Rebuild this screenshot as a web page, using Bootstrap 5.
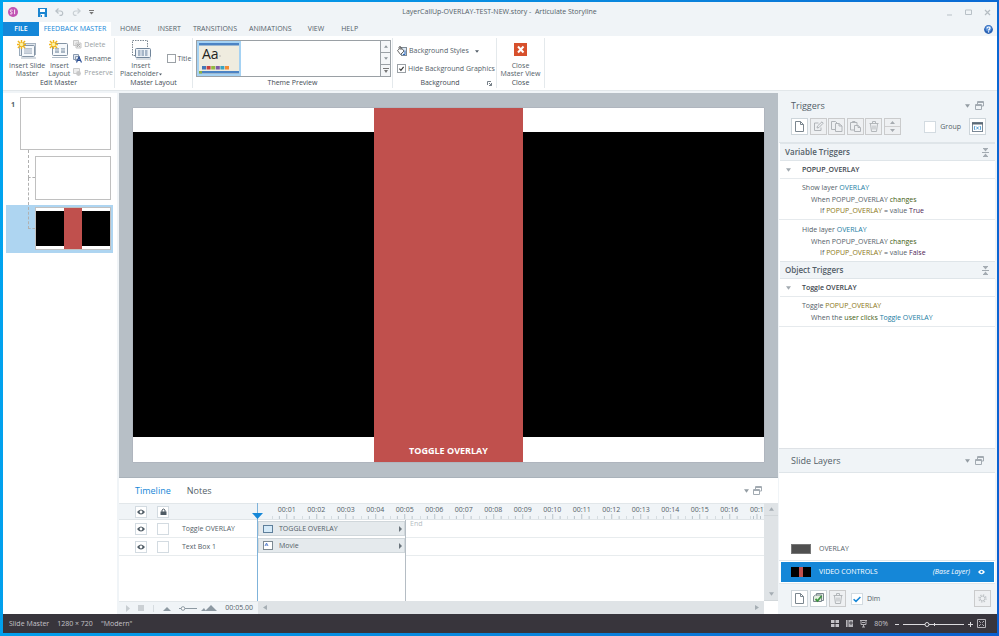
<!DOCTYPE html>
<html lang="en">
<head>
<meta charset="utf-8">
<meta name="viewport" content="width=device-width, initial-scale=1">
<title>LayerCallUp-OVERLAY-TEST-NEW.story - Articulate Storyline</title>
<link href="https://cdn.jsdelivr.net/npm/bootstrap@5.3.0/dist/css/bootstrap.min.css" rel="stylesheet">
<style>
:root{--ink:#535e68;--pale:#f0f4f7;--line:#dfe5e9;--blue:#1587d8}
body{font:7px/8px "Open Sans",sans-serif;color:var(--ink);background:linear-gradient(100deg,#00a5f0 0,#0a84dc 60%,#0a5fd0 100%);padding:2px 2px 3px 3px}
button{background:none;border:0;padding:0;color:inherit;font:inherit;line-height:8px}
input[type=checkbox]{appearance:none;margin:0;background:#fff;border:1px solid #d3dbe1;flex:none;width:12px;height:12px}
input[type=checkbox].tiny{width:9px;height:9px;border-color:#9ba1a6}
input.ticked:checked{background:#fff url("data:image/svg+xml,%3Csvg xmlns='http://www.w3.org/2000/svg' viewBox='0 0 10 10'%3E%3Cpath d='M2 5.2 4.2 7.6 8 2.6' fill='none' stroke='%23333' stroke-width='1.6'/%3E%3C/svg%3E") center/contain}
input.bluetick:checked{background:#fff url("data:image/svg+xml,%3Csvg xmlns='http://www.w3.org/2000/svg' viewBox='0 0 10 10'%3E%3Cpath d='M1.6 5.2 4 7.4 8.4 3' fill='none' stroke='%231587d8' stroke-width='1.5'/%3E%3C/svg%3E") center/contain}
svg{display:block;flex:none}
.shell{background:var(--pale)}
.titlebar{height:20px;padding:0 6px 0 5px}
.titletext{flex:1;text-align:center;white-space:pre}
.savebtn{margin-left:20px}
.side{width:150px}
.tabs{height:14px}
.tabs button{height:14px;padding:0 9px}
.tabs .filetab{width:36px;background:var(--blue);color:#fff;font-weight:600}
.tabs .current{width:72px;background:#fff;color:var(--blue);padding:0}
.ribbon{height:55px;background:#fff;border-bottom:1px solid #e2e7ea}
.rgroup{border-right:1px solid #e4e9ec;margin:2px 0;display:flex;flex-direction:column;flex:none}
.rgroup>div:first-child{height:41px;padding-top:2px}
.rlabel{text-align:center;color:#424b53}
.g-edit{width:112px}.g-layout{width:78px}.g-theme{width:200px}.g-bg{width:104px}.g-close{width:48px}
.inset{padding-left:6px;gap:3px}
.inset-s{padding-left:5px;gap:1px}
.big{display:flex;flex-direction:column;align-items:center;gap:2px;text-align:center;white-space:nowrap}
.big>svg{height:20px}
.stackbtns{display:flex;flex-direction:column;gap:5px}
.titlebox{margin-top:14px}
.gap-t{gap:2px}
.off{color:#9a9fa4}
.gallery{border:1px solid #9aa0a5;height:37px;margin:0 1px 0 3px}
.themecard{width:44px;background:#efecdf;border:2px solid #a5d2f3}
.spin{width:10px;border-left:1px solid #9aa0a5}
.spin button{flex:1;display:flex;align-items:center;justify-content:center;background:#f4f6f8;color:#8b9399}
.spin button+button{border-top:1px solid #9aa0a5}
.work{margin-top:2px;padding-right:2px}
.slides{width:114px;background:#fff;padding:4px 0 0 3px;margin-right:2px;flex:none}
.slideline{padding-right:6px}
.num{width:14px;padding:4px 0 0 5px;font-weight:700}
.thumb{border:1px solid #c0c0c0;background:#fff;flex:1}
.thumb.lg{height:53px}.thumb.md{height:44px;margin:6px 0 5px}
.branch{width:7px;margin-left:22px;display:flex;flex-direction:column}
.branch div{flex:1;border-left:1px dashed #b0b0b0}
.branch div:first-child{border-bottom:1px dashed #b0b0b0}
.branch div.nil{border-left:0}
.picked{background:#aed5f1;width:107px;padding:2px 2px 3px 0}
.minis{border:1px solid #c0c0c0;flex:1;height:43px}
.artwork{display:grid;grid-template-columns:241fr 148fr 241fr}
.strip{background:#000;border:solid #fff;border-width:24px 0 25px}
.minis .strip{border-width:3px 0}
.redcol{background:#c0504d;color:#fff;display:flex;align-items:end;justify-content:center}
.redcol button{font-size:9px;line-height:12px;font-weight:700;padding-bottom:5px}
.stage{background:#b7bfc6;padding:15px 14px;flex:1}
.stage .artwork{flex:1;box-shadow:0 0 1px #889}
.tl{background:#fff;height:137px;border-top:1px solid #a9b2ba}
.tlhead{height:25px;padding:0 16px}
.h9{font-size:9px;line-height:12px}
.h8{font-size:8px;line-height:10px}
.active-tab{color:var(--blue)}
.names{width:139px;border-right:1px solid #7fb3da;display:flex;flex-direction:column;flex:none}
.names .rowx{padding-left:16px;gap:10px}
.rowx{height:18px;display:flex;align-items:center;border-bottom:1px solid #e8ecee}
.rulerow{height:17px;background:var(--pale);border-top:1px solid #e2e7ea;border-bottom:1px solid #e0e5e8}
.names .rulerow{display:flex;align-items:center;padding-left:16px;gap:10px}
.cellbox{width:12px;height:12px;border:1px solid #d3dbe1;background:#fff;display:flex;align-items:center;justify-content:center}
.names .lbl{padding-left:3px}
.playhead{align-self:flex-end;margin:auto -6px 0 auto;position:relative}
.ruler{display:flex;overflow:hidden;padding-left:14px}
.sec{flex:1 0 0;text-align:center;min-width:0;display:flex;flex-direction:column;justify-content:end}
.sec.cut{flex:0 0 20px;overflow:hidden;text-align:left;padding-left:6px}
.sec svg{width:100%;height:5px}
.clips{width:148px;border-right:1px solid #b5bdc4;flex:none}
.clip{height:15px;background:#e5eaed;border:1px solid #d0d7db;display:flex;align-items:center;padding:0 2px 0 4px;margin-top:1px;margin-bottom:2px;gap:6px}
.endlbl{color:#b4bcc2}
.bar{height:13px}
.bar.ctl{width:139px;background:var(--pale);border-top:1px solid #e2e7ea;padding:0 5px 0 7px;flex:none}
.vrule{width:1px;height:7px;background:#d6dce0;margin:0 9px}
.bar.scroll{background:#dfe3e6;padding:0 5px}
.vs{width:14px;background:#dfe3e6;flex:none}
.vs div{height:13px;display:flex;align-items:center;justify-content:center;border:solid #d2d7da;border-width:0 0 1px}
.vs svg{color:#a5adb3}
.right{width:216px;background:#fff;margin-left:1px;flex:none}
.phead{background:var(--pale);border-bottom:1px solid var(--line);padding:0 9px 0 12px}
.trighead{padding-bottom:7px}
.ph1{height:25px}
.floaticon{margin:0 2px 0 5px}
.sect{background:var(--pale);border:solid var(--line);border-width:1px 0;font-weight:600;height:18px;padding:0 6px 0 5px;margin-left:1px}
.sub{height:18px;border-bottom:1px solid #e6eaed;font-weight:600;color:#3f484f;gap:11px;padding-left:6px;margin-left:1px}
.trig{padding:3px 0 3px 23px;border-bottom:1px solid #e6eaed;line-height:11px}
.trig+.trig{padding-top:4px}
.trig .l2{padding:1px 0 0 9px}.trig .l3{padding-left:18px}
.tool{width:17px;height:17px;background:#fff;border:1px solid #cdd5da;display:flex;align-items:center;justify-content:center;flex:none}
.tool.dis{background:#eef0f2;border-color:#cacbcc}
.tools{width:110px;flex:none}
.c-teal{color:#1b7da3}.c-green{color:#3f5e14}.c-gold{color:#8c7614}.c-purp{color:#4d1c56}
.laylist{height:88px;display:flex;flex-direction:column;justify-content:end;border-bottom:1px solid #e2e7ea}
.lay{height:22px;padding:0 9px 0 12px;gap:8px}
.lay.on{background:var(--blue);color:#fff;height:20px;margin:1px 1px 1px 2px;padding-left:10px}
.chip{width:20px;height:10px;background:#505050;border:1px solid #777}
.foot{height:31px;border-top:1px solid #e2e7ea;background:var(--pale);padding:0 4px 1px 12px;gap:2px}
.foot label{margin-left:3px}
.status{height:19px;background:#38353c;color:#c4c2c7;padding:0 11px 0 6px}
.statgap{gap:7px}
</style>
</head>
<body class="min-vh-100 d-flex flex-column">
<svg width="0" height="0" class="d-none" aria-hidden="true">
<symbol id="eye" viewBox="0 0 8 6"><path d="M0 3Q4-2 8 3 4 8 0 3z" fill="#4f5b64"/><circle cx="4" cy="3" r="1.4" fill="#fff"/></symbol>
<symbol id="dn" viewBox="0 0 6 4"><path d="M0 0h6L3 4z" fill="currentColor"/></symbol>
<symbol id="up" viewBox="0 0 6 4"><path d="M0 4h6L3 0z" fill="currentColor"/></symbol>
<symbol id="float" viewBox="0 0 9 9"><path d="M2.500 3V.5h6v4.500H7M.5 3.500h6v5h-6zM.5 4.500h6M2.500 1.500h6" fill="none" stroke="#a3abb2"/></symbol>
<symbol id="page" viewBox="0 0 9 11"><path d="M.5.5h5L8.500 3.500v7h-8zM5.500.5v3h3" fill="none" stroke="#7b868f"/></symbol>
<symbol id="bin" viewBox="0 0 10 11"><path d="M.5 2.500h9M3.500 2.500v-2h3v2M1.500 3l1 7.500h5l1-7.500M4 4.500v4M6 4.500v4" fill="none" stroke="#b3b7ba"/></symbol>
<symbol id="coll" viewBox="0 0 7 9"><path d="M0 4.500h7M1 .5h5M1 8.500h5" stroke="#a3abb2" fill="none"/><path d="M1.500 1h4L3.500 3.500zM1.500 8h4L3.500 5.500z" fill="#a3abb2"/></symbol>
<symbol id="star" viewBox="0 0 10 10"><path d="M5 0v10M0 5h10M1 1l8 8M9 1 1 9" stroke="#f0b51c" stroke-width="1.600"/><circle cx="5" cy="5" r="2" fill="#fff3a0"/></symbol>
</svg>
<div class="shell flex-grow-1 d-flex flex-column">
  <header>
    <div class="titlebar d-flex align-items-center">
      <div class="side d-flex align-items-center">
        <svg width="10" height="10" viewBox="0 0 10 10"><circle cx="5" cy="5" r="5" fill="#c154b4"/><path d="M4.600 3.300C3 2.600 2 3.200 2.100 4c.2 1 2.200.9 2.200 2 0 .9-1.300 1.200-2.300.7M6.600 2.500v4.700" fill="none" stroke="#fff" stroke-width=".9"/></svg>
        <button aria-label="Save" class="savebtn"><svg width="9" height="9" viewBox="0 0 9 9"><path d="M0 0h9v9H0z" fill="#1b85d0"/><path d="M2 1h5v3H2zM2.500 6h4v3h-4z" fill="#fff"/><path d="M3 7h1v2H3z" fill="#1b85d0"/></svg></button>
        <button aria-label="Undo" class="ms-2"><svg width="9" height="8" viewBox="0 0 9 8"><path d="M3.500.5.8 3l2.700 2.500M1 3h4.500a2.200 2.200 0 0 1 0 4.400H4.500" fill="none" stroke="#b9c1c7" stroke-width="1.200"/></svg></button>
        <button aria-label="Redo" class="ms-2"><svg width="9" height="8" viewBox="0 0 9 8"><path d="M5.500.5 8.200 3 5.500 5.500M8 3H3.500a2.200 2.200 0 0 0 0 4.400H4.500" fill="none" stroke="#c9d0d5" stroke-width="1.200"/></svg></button>
        <button aria-label="Customize" class="ms-1 ps-1"><svg width="5" height="5" viewBox="0 0 5 5"><path d="M0 .5h5" stroke="#777"/><path d="M.3 2h4.400L2.500 4.500z" fill="#777"/></svg></button>
      </div>
      <div class="titletext">LayerCallUp-OVERLAY-TEST-NEW.story -  Articulate Storyline</div>
      <div class="side d-flex justify-content-end align-items-center gap-2">
        <button aria-label="Minimize" class="me-1"><svg width="7" height="7"><path d="M1 6h5" stroke="#b9c1c7"/></svg></button>
        <button aria-label="Maximize" class="me-1"><svg width="7" height="6"><path d="M.5 1h6v4.500h-6z" fill="none" stroke="#b9c1c7"/></svg></button>
        <button aria-label="Close window"><svg width="7" height="7"><path d="M1 1l5 5M6 1 1 6" stroke="#b5bdc3" stroke-width="1.200"/></svg></button>
      </div>
    </div>
    <nav class="tabs d-flex" aria-label="Ribbon tabs">
      <button class="filetab">FILE</button><button class="current">FEEDBACK MASTER</button><button>HOME</button><button class="px-2">INSERT</button><button class="px-1">TRANSITIONS</button><button class="px-2">ANIMATIONS</button><button class="px-2">VIEW</button><button>HELP</button>
      <button class="ms-auto px-1" aria-label="Help"><svg width="9" height="9" viewBox="0 0 9 9"><circle cx="4.500" cy="4.500" r="4.400" fill="#2a62b4"/><circle cx="4.500" cy="3.500" r="3" fill="#5b93dc"/><path d="M3 3.500C3 1.500 6.200 1.600 6 3.300 5.900 4.300 4.600 4.200 4.600 5.500M4.600 6.300v1.100" fill="none" stroke="#fff" stroke-width="1.200"/></svg></button>
    </nav>
    <div class="ribbon d-flex">
      <div class="rgroup g-edit">
        <div class="d-flex inset align-items-start">
          <button class="big"><svg width="20" height="20" viewBox="0 0 20 20"><rect x="4.500" y="3.500" width="14" height="11" fill="#dfe5ec" stroke="#a7b3c0"/><rect x="2.500" y="5.500" width="14" height="10" fill="#e9edf2" stroke="#9aabbb"/><rect x="4.500" y="5.500" width="13" height="11" rx="1" fill="#f6f9fc" stroke="#8494a5"/><rect x="7" y="8" width="8" height="6" fill="#b9c4d0"/><path d="M7 10h8M7 12h8" stroke="#f6f9fc" stroke-width=".6"/><path d="M4 18h15" stroke="#a9b5c2"/><use href="#star" width="9" height="9"/></svg><span>Insert Slide<br>Master</span></button>
          <button class="big"><svg width="20" height="20" viewBox="0 0 20 20"><rect x="3.500" y="3.500" width="15" height="12" rx="1" fill="#f6f9fc" stroke="#8494a5"/><path d="M3 17.500h16" stroke="#b0bcc8"/><path d="M6 8h4v5H6zM12 8h4v5h-4z" fill="#a9b7c5"/><path d="M6 10h11" stroke="#fff" stroke-width=".6"/><use href="#star" width="9" height="9"/></svg><span>Insert<br>Layout</span></button>
          <div class="stackbtns">
            <button class="d-flex gap-t off align-items-center"><svg width="9" height="9" viewBox="0 0 9 9"><path d="M.5.500h5v5h-5zM3 3h5v5H3z" fill="#ececec" stroke="#c8c8c8"/><path d="M4 4l3 3M7 4 4 7" stroke="#b0b0b0"/></svg>Delete</button>
            <button class="d-flex gap-t align-items-center"><svg width="9" height="9" viewBox="0 0 9 9"><path d="M.5.500h5v5h-5zM2.500 2.500h4v4h-4z" fill="#e3e9f0" stroke="#8b9bb0"/><path d="M3.500 8.500 6 3 8.500 8.500M4.500 6.500h3" fill="none" stroke="#2c4f94" stroke-width="1.200"/></svg>Rename</button>
            <button class="d-flex gap-t off align-items-center"><svg width="9" height="9" viewBox="0 0 9 9"><path d="M.5.500h6v5h-6z" fill="#eee" stroke="#ccc"/><circle cx="5.500" cy="5.500" r="2.400" fill="#c8c8c8"/></svg>Preserve</button>
          </div>
        </div>
        <div class="rlabel">Edit Master</div>
      </div>
      <div class="rgroup g-layout">
        <div class="d-flex inset-s align-items-start">
          <button class="big"><svg width="20" height="20" viewBox="0 0 20 20"><rect x="1.500" y=".5" width="15" height="15" fill="none" stroke="#7d8993" stroke-dasharray="1.500 1"/><rect x="4.500" y="8.500" width="15" height="9" rx="1" fill="#eef3f8" stroke="#71859a"/><path d="M7 11h10M7 13h10M7 15h10" stroke="#8fa3b8" stroke-width="1.300" stroke-dasharray="2.500 1"/><path d="M5 19h15" stroke="#b0bcc8"/></svg><span>Insert<br>Placeholder<svg class="d-inline-block" width="3" height="3"><use href="#dn"/></svg></span></button>
          <label class="d-flex align-items-center gap-t titlebox ms-1"><input type="checkbox" class="tiny">Title</label>
        </div>
        <div class="rlabel">Master Layout</div>
      </div>
      <div class="rgroup g-theme">
        <div><div class="gallery d-flex">
          <div class="themecard"><svg width="40" height="31" viewBox="0 0 40 31"><path d="M0 0h40v2.500H0zM0 28h40v2.500H0z" fill="#4b83c4"/><path d="M0 28h3v2.500H0z" fill="#8db33e"/><path d="M20 13h2" stroke="#999" stroke-width=".6"/><path d="M3 23h4v3.500H3z" fill="#4478b8"/><path d="M7.600 23h4v3.500h-4z" fill="#c8403f"/><path d="M12.200 23h4v3.500h-4z" fill="#93b840"/><path d="M16.800 23h4v3.500h-4z" fill="#7c5ba6"/><path d="M21.400 23h4v3.500h-4z" fill="#37a3bf"/><path d="M26 23h4v3.500h-4z" fill="#f38a33"/><text x="3" y="16" font-size="14" fill="#222" font-family="Open Sans, sans-serif">Aa</text></svg></div>
          <div class="spin ms-auto d-flex flex-column"><button aria-label="Up"><svg width="4" height="3"><use href="#up"/></svg></button><button aria-label="Down"><svg width="4" height="3"><use href="#dn"/></svg></button><button aria-label="More"><svg width="6" height="6"><path d="M0 .5h6" stroke="#777"/><path d="M1 2h4L3 5z" fill="#777"/></svg></button></div>
        </div></div>
        <div class="rlabel">Theme Preview</div>
      </div>
      <div class="rgroup g-bg">
        <div class="d-flex flex-column justify-content-center gap-2 ps-1">
          <button class="d-flex align-items-center gap-t"><svg width="10" height="10" viewBox="0 0 10 10"><rect x="4.500" y="1.500" width="5" height="8" fill="#dce9f5" stroke="#7f8b96"/><path d="M.5 4.500 4 1.500l3 3.500-3.500 3.500zM2 2.500V1q1-1 2 0v3" fill="#fff" stroke="#555" stroke-width=".9"/><path d="M6 8.500h2v-4" stroke="#2c66b8" fill="none"/></svg>Background Styles<svg class="ms-1" width="4" height="3"><use href="#dn"/></svg></button>
          <label class="d-flex align-items-center gap-t text-nowrap"><input type="checkbox" class="tiny ticked" checked><span>Hide Background Graphics</span></label>
        </div>
        <div class="rlabel d-flex"><span class="flex-grow-1">Background</span><button aria-label="Background options" class="me-1"><svg width="5" height="5" viewBox="0 0 5 5"><path d="M.5 4V.5H4M2 2l2.500 2.500M4.500 2v2.500H2" fill="none" stroke="#68727b" stroke-width=".9"/></svg></button></div>
      </div>
      <div class="rgroup g-close">
        <div><button class="big w-100"><svg width="14" height="20" viewBox="0 0 14 20"><rect y="3" width="13" height="13" fill="#d7502c"/><path d="M4 6.500l5.500 6M9.500 6.500l-5.500 6" stroke="#fff" stroke-width="2"/></svg><span>Close<br>Master View</span></button></div>
        <div class="rlabel">Close</div>
      </div>
    </div>
  </header>
  <div class="work d-flex flex-grow-1">
    <aside class="slides">
      <div class="d-flex slideline"><div class="num">1</div><div class="thumb lg"></div></div>
      <div class="d-flex slideline"><div class="branch"><div></div><div></div></div><div class="thumb md"></div></div>
      <div class="d-flex picked"><div class="branch"><div></div><div class="nil"></div></div><div class="minis artwork"><div class="strip"></div><div class="redcol"></div><div class="strip"></div></div></div>
    </aside>
    <main class="flex-grow-1 d-flex flex-column overflow-hidden">
      <div class="stage d-flex"><div class="artwork"><div class="strip"></div><div class="redcol"><button>TOGGLE OVERLAY</button></div><div class="strip"></div></div></div>
      <section class="tl d-flex flex-column">
        <div class="tlhead d-flex align-items-center"><button class="h9 active-tab">Timeline</button><button class="h9 ms-3">Notes</button>
          <svg class="ms-auto" width="5" height="4"><use href="#dn" color="#939ca3"/></svg><svg class="ms-1" width="9" height="9"><use href="#float"/></svg></div>
        <div class="d-flex flex-grow-1">
          <div class="names">
            <div class="rulerow"><div class="cellbox"><svg width="8" height="6"><use href="#eye"/></svg></div><div class="cellbox"><svg width="7" height="8" viewBox="0 0 7 8"><path d="M.5 3.500h6V7h-6z" fill="#4f5b64"/><path d="M2 4V2q1.500-2 3 0v2" fill="none" stroke="#4f5b64"/></svg></div><svg class="playhead" width="11" height="6"><path d="M0 0h11L5.500 6z" fill="#1587d8"/></svg></div>
            <div class="rowx"><div class="cellbox"><svg width="8" height="6"><use href="#eye"/></svg></div><input type="checkbox" aria-label="Lock Toggle OVERLAY"><span class="lbl">Toggle OVERLAY</span></div>
            <div class="rowx"><div class="cellbox"><svg width="8" height="6"><use href="#eye"/></svg></div><input type="checkbox" aria-label="Lock Text Box 1"><span class="lbl">Text Box 1</span></div>
          </div>
          <div class="flex-grow-1 d-flex flex-column overflow-hidden">
            <div class="rulerow ruler" id="ruler"></div>
            <div class="d-flex flex-grow-1">
              <div class="clips"><div class="clip"><svg width="10" height="8"><rect x=".5" y=".5" width="9" height="7" fill="#d5eaf8" stroke="#5e7f9b"/></svg>TOGGLE OVERLAY<svg class="ms-auto" width="3" height="6"><path d="M0 0l3 3-3 3z" fill="#6a747c"/></svg></div><div class="clip"><svg width="10" height="9"><rect x=".5" y=".5" width="9" height="8" fill="#fff" stroke="#7d8992"/><path d="M2 5l1.500-3L5 5M2.500 4h2" fill="none" stroke="#2f62c0" stroke-width=".7"/></svg>Movie<svg class="ms-auto" width="3" height="6"><path d="M0 0l3 3-3 3z" fill="#6a747c"/></svg></div></div>
              <div class="flex-grow-1"><div class="rowx align-items-start ps-1 endlbl">End</div><div class="rowx"></div></div>
            </div>
          </div>
          <div class="vs d-flex flex-column justify-content-between"><div><svg width="5" height="4"><use href="#up"/></svg></div><div><svg width="5" height="4"><use href="#dn"/></svg></div></div>
        </div>
        <div class="d-flex">
          <div class="bar ctl d-flex align-items-center"><svg width="4" height="7"><path d="M0 0l4 3.500L0 7z" fill="#c7cdd1"/></svg><svg class="ms-2" width="6" height="6"><path d="M0 0h6v6H0z" fill="#cbd0d4"/></svg><span class="vrule"></span><svg width="8" height="5"><path d="M0 5l4-4 4 4z" fill="#8d99a2"/></svg><svg class="ms-2" width="18" height="5"><path d="M0 2.500h18" stroke="#8d99a2"/><circle cx="4" cy="2.500" r="1.800" fill="#fff" stroke="#8d99a2"/></svg><svg class="ms-1" width="16" height="6"><path d="M0 6l3-3 2 3zM4 6l6-6 6 6z" fill="#8d99a2"/></svg><span class="ms-auto">00:05.00</span></div>
          <div class="bar scroll flex-grow-1 d-flex align-items-center justify-content-between"><svg width="4" height="5"><path d="M4 0v5L0 2.500z" fill="#a5adb3"/></svg><svg width="4" height="5"><path d="M0 0v5l4-2.500z" fill="#a5adb3"/></svg></div>
          <div class="bar vs bg-white"></div>
        </div>
      </section>
    </main>
    <aside class="right d-flex flex-column">
      <div class="phead trighead">
        <div class="ph1 d-flex align-items-center h9">Triggers<svg class="ms-auto" width="5" height="4"><use href="#dn" color="#939ca3"/></svg><svg class="floaticon" width="9" height="9"><use href="#float"/></svg></div>
        <div class="d-flex align-items-center">
          <div class="tools d-flex justify-content-between">
            <button class="tool" aria-label="New trigger"><svg width="9" height="11"><use href="#page"/></svg></button>
            <button class="tool dis" aria-label="Edit"><svg width="11" height="11" viewBox="0 0 11 11"><path d="M8 6.500v3H1.500V2h4M4 7l.5-2L9 .8l1.200 1.400L6 6.500z" fill="none" stroke="#b0b4b8"/></svg></button>
            <button class="tool dis" aria-label="Copy"><svg width="12" height="11" viewBox="0 0 12 11"><path d="M4 8.500H.5v-8h4L6 2M4.500 2.500H8l3 2.500v5.500H4.500zM8 2.500V5h3" fill="none" stroke="#b0b4b8"/></svg></button>
            <button class="tool dis" aria-label="Paste"><svg width="11" height="11" viewBox="0 0 11 11"><path d="M4 9H.5V1.500H7V4M2.500 1.500v-1h2.500v1M4.500 4.500H8l2.500 2v4h-6zM8 4.500v2h2" fill="none" stroke="#b0b4b8"/></svg></button>
            <button class="tool dis" aria-label="Delete trigger"><svg width="10" height="11"><use href="#bin"/></svg></button>
            <button class="tool dis" aria-label="Move"><svg width="15" height="13" viewBox="0 0 15 13"><path d="M0 6.500h15" stroke="#cfcfd0"/><path d="M5 4h5L7.500 1zM5 9h5l-2.500 3z" fill="#a6abb0"/></svg></button>
          </div>
          <label class="ms-auto d-flex align-items-center gap-1"><input type="checkbox"><span>Group</span></label>
          <button class="tool ms-2" aria-label="Variables"><svg width="11" height="10" viewBox="0 0 11 10"><rect x=".5" y=".5" width="10" height="9" fill="#fff" stroke="#7a8895"/><path d="M0 1.500h11" stroke="#5c6a76" stroke-width="2"/><path d="M2.800 4q-1 2 0 4M8.200 4q1 2 0 4M4.300 4.600l2.400 2.800M6.700 4.600 4.300 7.400" fill="none" stroke="#2f86c8" stroke-width=".8"/></svg></button>
        </div>
      </div>
      <div class="sect d-flex align-items-center h8">Variable Triggers<svg class="ms-auto" width="7" height="9"><use href="#coll"/></svg></div>
      <div class="sub d-flex align-items-center"><svg width="5" height="4"><use href="#dn" color="#a2aab0"/></svg>POPUP_OVERLAY</div>
      <div class="trig"><div>Show layer <span class="c-teal">OVERLAY</span></div><div class="l2">When POPUP_OVERLAY <span class="c-green">changes</span></div><div class="l3">If <span class="c-gold">POPUP_OVERLAY</span> = value <span class="c-purp">True</span></div></div>
      <div class="trig border-0"><div>Hide layer <span class="c-teal">OVERLAY</span></div><div class="l2">When POPUP_OVERLAY <span class="c-green">changes</span></div><div class="l3">If <span class="c-gold">POPUP_OVERLAY</span> = value <span class="c-purp">False</span></div></div>
      <div class="sect d-flex align-items-center h8">Object Triggers<svg class="ms-auto" width="7" height="9"><use href="#coll"/></svg></div>
      <div class="sub d-flex align-items-center"><svg width="5" height="4"><use href="#dn" color="#a2aab0"/></svg>Toggle OVERLAY</div>
      <div class="trig"><div>Toggle <span class="c-gold">POPUP_OVERLAY</span></div><div class="l2">When the <span class="c-green">user clicks</span> <span class="c-teal">Toggle OVERLAY</span></div></div>
      <div class="mt-auto">
        <div class="phead ph1 border-top d-flex align-items-center h9">Slide Layers<svg class="ms-auto" width="5" height="4"><use href="#dn" color="#939ca3"/></svg><svg class="floaticon" width="9" height="9"><use href="#float"/></svg></div>
        <div class="laylist"><div class="lay d-flex align-items-center"><span class="chip"></span>OVERLAY</div></div>
        <div class="lay on d-flex align-items-center"><svg width="20" height="10"><path d="M0 0h20v10H0z" fill="#000"/><path d="M8 0h4v10H8z" fill="#c0504d"/></svg>VIDEO CONTROLS<em class="ms-auto">(Base Layer)</em><svg width="7" height="6" viewBox="0 0 8 6"><path d="M0 3Q4-2 8 3 4 8 0 3z" fill="#fff"/><circle cx="4" cy="3" r="1.300" fill="#1587d8"/></svg></div>
        <div class="foot d-flex align-items-center">
          <button class="tool" aria-label="New layer"><svg width="9" height="11"><use href="#page"/></svg></button>
          <button class="tool" aria-label="Duplicate layer"><svg width="11" height="11" viewBox="0 0 11 11"><path d="M3.500 2.500V.5h7v7h-2M.5 3.500 2.500 2h6v6.500H.5z" fill="#e4efe0" stroke="#7b868f"/><path d="M2.500 6 4.500 8 8.500 3" fill="none" stroke="#3f9440" stroke-width="1.800"/></svg></button>
          <button class="tool dis" aria-label="Delete layer"><svg width="10" height="11"><use href="#bin"/></svg></button>
          <label class="d-flex align-items-center gap-1"><input type="checkbox" class="bluetick" checked><span>Dim</span></label>
          <button class="tool dis ms-auto" aria-label="Layer settings"><svg width="9" height="9" viewBox="0 0 9 9"><circle cx="4.500" cy="4.500" r="2.300" fill="none" stroke="#c2c6c9"/><circle cx="4.500" cy="4.500" r="3.500" fill="none" stroke="#c2c6c9" stroke-width="1.400" stroke-dasharray="1.400 1.350"/></svg></button>
        </div>
      </div>
    </aside>
  </div>
  <footer class="status d-flex align-items-center"><span>Slide Master</span><span class="ms-2">1280 × 720</span><span class="ms-2">"Modern"</span>
    <div class="ms-auto d-flex align-items-center statgap">
      <svg width="8" height="7"><path d="M0 0h3.500v3H0zM4.500 0H8v3H4.500zM0 4h3.500v3H0zM4.500 4H8v3H4.500z" fill="#c5c3c8"/></svg>
      <svg width="7" height="7"><path d="M0 0h7v7H0z" fill="#b5b3b8"/><path d="M2 0v7M4 2h2v2H4z" stroke="#38353c" fill="none" stroke-width=".8"/></svg>
      <svg width="7" height="8"><path d="M0 .5h7M1 1v3.500h5V1M3.500 4.500V7M2 7h3M2 2.500h3" fill="none" stroke="#b5b3b8"/></svg>
      <span>80%</span>
      <div class="d-flex align-items-center gap-1">
        <svg width="78" height="8" viewBox="0 0 78 8"><path d="M0 4.500h4M8 4.500h61M73 4.500h5M75.500 2v5" stroke="#dcdbde"/><circle cx="32" cy="4.500" r="2" fill="#38353c" stroke="#dcdbde"/><path d="M39.500 3v3" stroke="#dcdbde"/></svg>
        <svg width="9" height="9"><path d="M.5.5h8v8h-8z" fill="none" stroke="#b5b3b8"/><path d="M2 2l5 5M7 2 2 7" stroke="#b5b3b8"/><path d="M3.500 3.500h2v2h-2z" fill="#38353c"/></svg>
      </div>
    </div>
  </footer>
</div>
<script>
const ruler = document.getElementById('ruler');
for (let s = 1; s <= 17; s++) {
  const cell = document.createElement('div');
  cell.className = s > 16 ? 'sec cut' : 'sec';
  cell.innerHTML = '<span>00:' + String(s).padStart(2, '0') + '</span><svg>' +
    [0, 25, 50, 75].map(p => `<line x1="${p}%" x2="${p}%" y1="${p === 50 ? 0 : 2}" y2="5" stroke="#b9c3ca"/>`).join('') + '</svg>';
  ruler.append(cell);
}
</script>
<script src="https://cdn.jsdelivr.net/npm/bootstrap@5.3.0/dist/js/bootstrap.bundle.min.js"></script>
</body>
</html>
